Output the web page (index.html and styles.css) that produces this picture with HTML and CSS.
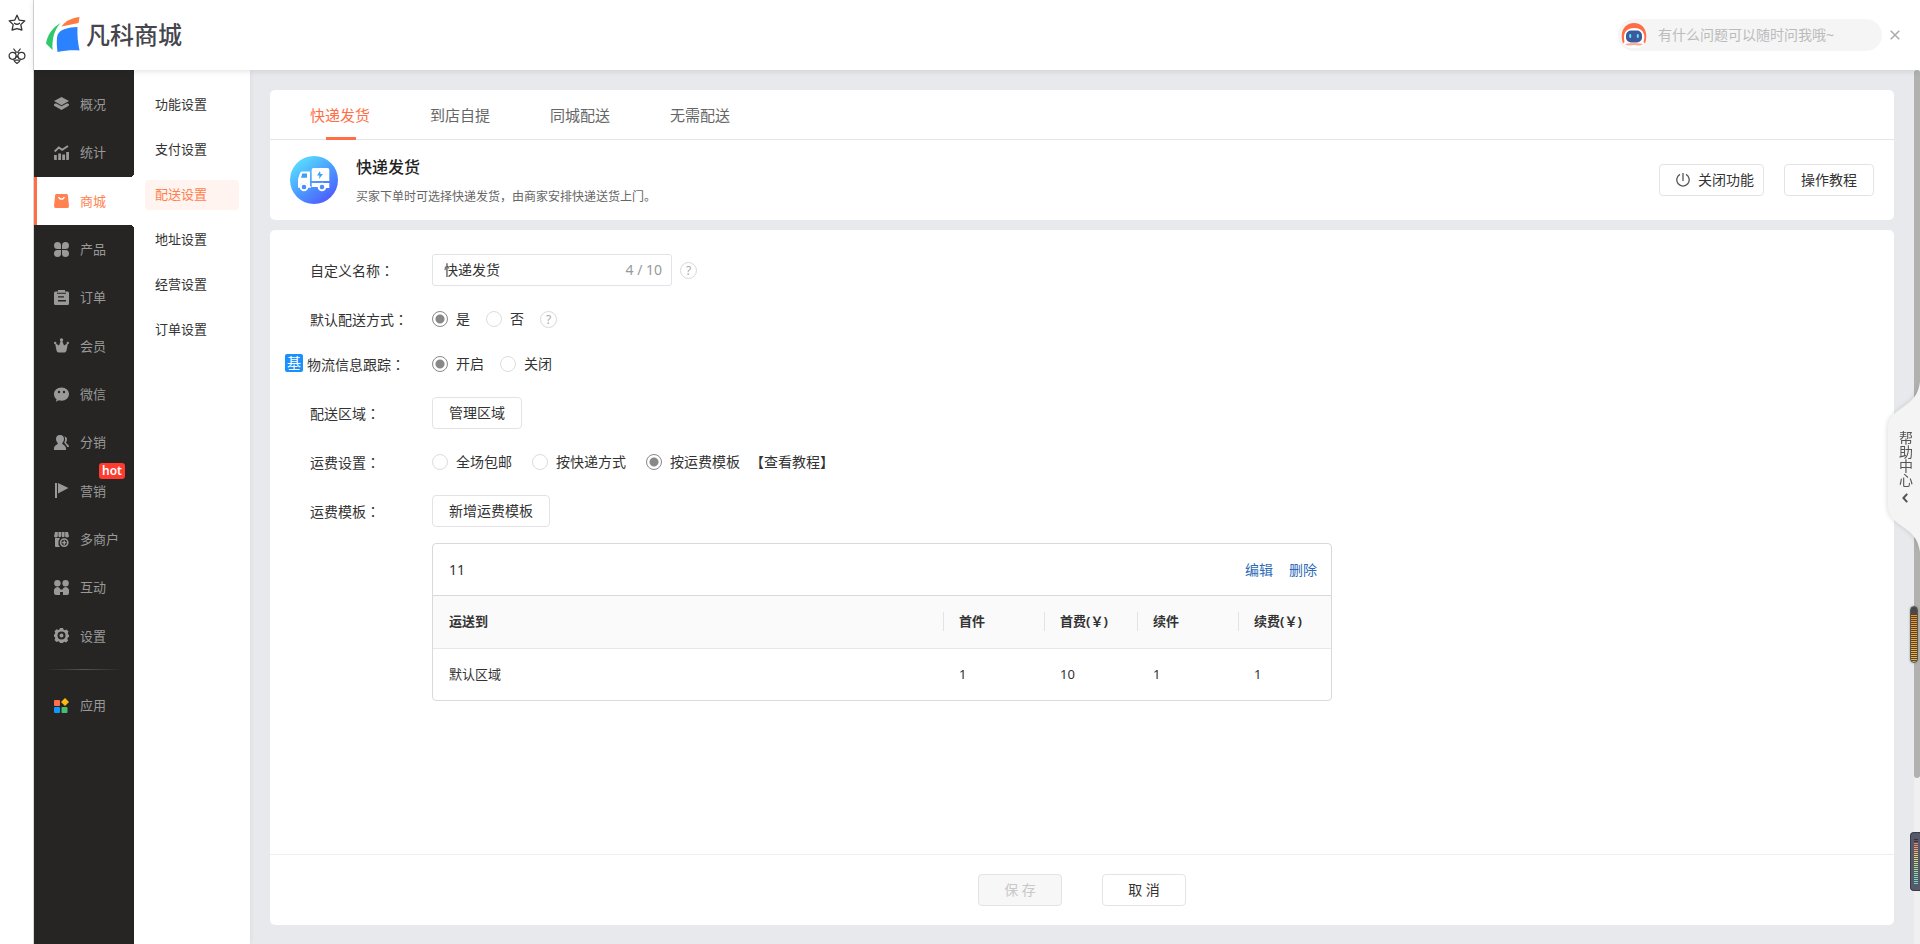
FILE: index.html
```html
<!DOCTYPE html>
<html lang="zh-CN">
<head>
<meta charset="utf-8">
<title>凡科商城 - 配送设置</title>
<link rel="stylesheet" href="styles.css">
</head>
<body>
<aside class="strip">
  <svg class="strip-icon" viewBox="0 0 18 18" fill="none" stroke="#333" stroke-width="1.3" stroke-linejoin="round" stroke-linecap="round"><path d="M9 1.2l2.3 5 5.5.6-4 3.8 1.1 5.4-4.9-1.3L4.100 16l1.100-5.400-4-3.800 5.500-.6z"/><path d="M6.500 9.200q2.500 2.200 5 0"/></svg>
  <svg class="strip-icon" viewBox="0 0 18 18" fill="none" stroke="#333" stroke-width="1.200" stroke-linecap="round"><circle cx="4.600" cy="8.800" r="3.500"/><circle cx="13.400" cy="8.800" r="3.500"/><path d="M7.200 6.200Q9 3.400 10.800 6.200M7.200 11.200L9 9l1.800 2.200M5.800 2L7.400 4.200M12.200 2L10.600 4.200M5.600 12.300C6 14 7.500 15.400 9 16.400c1.500-1 3-2.400 3.400-4.100M7.400 13.200h3.200"/></svg>
</aside>
<div class="app">
  <header class="header">
    <a class="logo" href="#">
      <svg class="logo-mark" viewBox="0 0 34 36"><path d="M14.500 6C6 11 1.500 18 0 26.500l6.500 6.500C6 22 8 13 14.500 6z" fill="#2fc96b"/><path d="M33.500 0C25 1 19 4.500 15.500 9.500L32.500 6z" fill="#ff7a40"/><path d="M31.500 10C22 10.500 14 12 11.500 18c-1 4-1 10 0 17 7-1.500 15-2 22-1.500-1.500-7-2.500-15-2-23.500z" fill="#2b82ff"/></svg>
      <span>凡科商城</span>
    </a>
    <div class="chat">
      <div class="chat-box">
        <svg class="robot" viewBox="0 0 26 26"><circle cx="13" cy="14" r="13" fill="#fff"/><path d="M2 21.500C-2 11 3 1 13 1s15 10 11 20.500l-1.500-1.500c3-9-2-14-9.500-14S1.500 11 3.500 20z" fill="#ff6f47"/><rect x="5" y="8.500" width="16" height="12" rx="5" fill="#3c5a9b"/><rect x="8.200" y="12" width="2" height="4" rx="1" fill="#5be5f5"/><rect x="15.800" y="12" width="2" height="4" rx="1" fill="#5be5f5"/><path d="M4 22q9-2 18 0-2 2-4 1.500-5-.8-10 0Q6 24 4 22z" fill="#ffa890"/></svg>
        <input class="chat-input" type="text" aria-label="咨询问题" placeholder="有什么问题可以随时问我哦~">
      </div>
      <button class="close" aria-label="关闭"><svg viewBox="0 0 10 10" stroke="#aaa" stroke-width="1.500"><path d="M.7.7l8.600 8.600M9.300.7L.7 9.300"/></svg></button>
    </div>
  </header>
  <div class="body">
    <nav class="side">
      <div class="side-list">
        <a class="side-item" href="#"><svg viewBox="0 0 15 15"><path d="M7.500 0L15 4 7.500 8.300 0 4zM0 7.200l1.800-.9 5.700 3 5.700-3 1.800.9c.2 1.300-.5 1.800-1 2.100L7.500 13 1 9.300C.2 8.800-.2 8.300 0 7.200z"/></svg>概况</a>
        <a class="side-item" href="#"><svg viewBox="0 0 15 15"><path d="M0 10h2.800v5H1q-1 0-1-1zM4.200 8.500H7V15H4.200zM8.200 9.500H11V15H8.200zM12.200 7H15v7q0 1-1 1h-1.800z"/><path d="M.6 6.500l4.200-4 3.400 2.400L14 1" fill="none" stroke="currentColor" stroke-width="2"/></svg>统计</a>
        <a class="side-item active" href="#"><svg viewBox="0 0 15 15"><path fill-rule="evenodd" d="M2.500 1h10q1.200 0 1.400 1.200L15 13q0 2-1.500 2h-12Q0 15 0 13L1.100 2.200Q1.300 1 2.500 1zM4 4.200c1 3.400 6 3.400 7 0l-1.300-.4c-.8 2-3.600 2-4.400 0z"/></svg>商城</a>
        <a class="side-item" href="#"><svg viewBox="0 0 15 15"><path d="M3.500 0Q7 0 7 3.500V7H3.500Q0 7 0 3.500T3.500 0zM11.500 0Q15 0 15 3.500T11.500 7H8V3.500Q8 0 11.500 0zM3.500 8H7v3.500Q7 15 3.500 15T0 11.500 3.500 8zM8 8h3.500Q15 8 15 11.500T11.500 15 8 11.500z"/></svg>产品</a>
        <a class="side-item" href="#"><svg viewBox="0 0 15 15"><path fill-rule="evenodd" d="M4 0h7v1.500h2.500Q15 1.500 15 3v10.500q0 1.500-1.500 1.500h-12Q0 15 0 13.500V3q0-1.500 1.500-1.500H4zM3 2.800v1h9v-1zm1 3.400v1.400h6V6.200zM4 10v1.400h8V10z"/></svg>订单</a>
        <a class="side-item" href="#"><svg viewBox="0 0 15 15"><circle cx="7.500" cy="1.900" r="1.700"/><circle cx="1.200" cy="4.900" r="1.200"/><circle cx="13.800" cy="4.900" r="1.200"/><path d="M1 5l4 2.500L6.800 3h1.400L10 7.500 14 5l-1.500 7.500Q12 14.500 10.500 14.500h-6Q3 14.500 2.500 12.500z"/></svg>会员</a>
        <a class="side-item" href="#"><svg viewBox="0 0 15 15"><path fill-rule="evenodd" d="M7.500.5C12 .5 15 3.500 15 7s-3 6.700-7.500 6.700c-1 0-1.800-.1-2.700-.4L2 14.800l.5-2.600C.8 11 0 9 0 7 0 3.500 3 .5 7.500.5zM5 3.800a1.200 1.200 0 100 2.400 1.200 1.200 0 000-2.400zm5 0a1.200 1.200 0 100 2.400 1.200 1.200 0 000-2.400z"/></svg>微信</a>
        <a class="side-item" href="#"><svg viewBox="0 0 15 15"><path d="M6 0c3 0 4 2 4 4 0 1.800-1 3.200-1.800 4.200 0 1.500 3.800 2 3.800 5.300V15H0v-1.500c0-3.300 3.800-3.800 3.800-5.300C3 7.200 2 5.800 2 4c0-2 1-4 4-4zM10.300 1.500c3 .3 3.400 3.300 1.700 6 0 1.200 3 1.800 3 4.500h-1.800c-.5-2-2-2.800-3-4.500C11.500 5.500 11.400 3 10.300 1.500z"/></svg>分销</a>
        <a class="side-item" href="#"><svg viewBox="0 0 15 15"><path d="M1 0h2v15H1zM4 0l10.500 5L4 10.500z"/></svg>营销<span class="hot">hot</span></a>
        <a class="side-item" href="#"><svg viewBox="0 0 15 15"><path d="M1 0h2.800v4.600q-1.800 1.800-3.800 0zM4.400 0h2.800v4.600q-1.300 1.500-2.800 0zM7.800 0h2.800v4.600q-1.300 1.500-2.800 0zM11.200 0H14l1 4.600q-2 1.800-3.800 0zM1 6h5L4.500 9v4l1.500 2H2q-1 0-1-1z"/><circle cx="10.200" cy="10.600" r="3.600" fill="none" stroke="currentColor" stroke-width="1.600"/><path d="M9.500 8.500H11v4.200H9.500zM8.100 9.900h4.200v1.400H8.100z"/></svg>多商户</a>
        <a class="side-item" href="#"><svg viewBox="0 0 15 15"><circle cx="3.400" cy="3.200" r="3.200"/><circle cx="11.600" cy="3.200" r="3.200"/><path d="M0 9.500Q1 7 3.400 7T6.500 9.500h2Q9.200 7 11.600 7T15 9.500V13q0 2-2 2H9v-3H6v3H2q-2 0-2-2z"/></svg>互动</a>
        <a class="side-item" href="#"><svg viewBox="0 0 15 15"><path fill-rule="evenodd" d="M6 0h3l.6 1.800 1.200.5 1.700-.8 2 2-.8 1.800.5 1.100L15 7v2l-1.200.6-.5 1.200.8 1.700-2 2-1.700-.8-1 .5L9 15H6l-.6-1.300-1.200-.5-1.700.8-2-2 .8-1.700-.5-1.200L0 8.500V6.500L.8 6l.5-1-.8-1.700 2-2 1.700.8 1.200-.5zm1.500 3.500a4 4 0 100 8 4 4 0 000-8zm0 2a2 2 0 110 4 2 2 0 010-4z"/></svg>设置</a>
      </div>
      <hr class="side-line">
      <a class="side-item apps" href="#"><svg viewBox="0 0 15 15"><rect y="2" width="6" height="6" rx="1" fill="#ff6f47"/><rect y="9" width="6" height="6" rx="1" fill="#0d99ff"/><rect x="7.500" y="9" width="6" height="6" rx="1" fill="#49bf6b"/><path d="M11 0l4 4-4 4-4-4z" fill="#ffb910"/></svg>应用</a>
    </nav>
    <nav class="sub">
      <a class="sub-item" href="#">功能设置</a>
      <a class="sub-item" href="#">支付设置</a>
      <a class="sub-item current" href="#">配送设置</a>
      <a class="sub-item" href="#">地址设置</a>
      <a class="sub-item" href="#">经营设置</a>
      <a class="sub-item" href="#">订单设置</a>
    </nav>
    <main class="main">
      <section class="card">
        <nav class="tabs">
          <a class="tab selected" href="#">快递发货</a>
          <a class="tab" href="#">到店自提</a>
          <a class="tab" href="#">同城配送</a>
          <a class="tab" href="#">无需配送</a>
        </nav>
        <div class="intro">
          <svg class="truck" viewBox="0 0 48 48"><defs><linearGradient id="g" x1="0.100" y1="0.100" x2="0.800" y2="1"><stop offset="0" stop-color="#5ae0ff"/><stop offset=".5" stop-color="#4a9dff"/><stop offset="1" stop-color="#4f55ff"/></linearGradient></defs><circle cx="24" cy="24" r="24" fill="url(#g)"/><path d="M23.500 12h14q1.800 0 1.800 1.800V25H21.700V13.800q0-1.800 1.800-1.800zM12 15.500h8V31h-2a4 4 0 00-8 0H8v-8l2-6q.5-1.500 2-1.500zM21.700 27h17.600v5H36a4 4 0 00-8-1h-6.300z" fill="#fff"/><path d="M12.300 17.500H17v4.300h-6zM30 15l-3 4.500h2.500l-.5 3.500 4-5h-2.500z" fill="#3c9ffa"/><path d="M8 31h4M18 31h3" stroke="#fff" stroke-width="1.500"/><g fill="#4b8dff" stroke="#fff" stroke-width="2"><circle cx="14" cy="31" r="3.300"/><circle cx="32" cy="31" r="3.300"/></g></svg>
          <div class="intro-text">
            <h1>快递发货</h1>
            <p>买家下单时可选择快递发货，由商家安排快递送货上门。</p>
          </div>
          <div class="intro-actions">
            <button class="btn power"><svg viewBox="0 0 14 14" fill="none" stroke="#555" stroke-width="1.300"><path d="M4 1.400a6.200 6.200 0 106 0M7 0v8"/></svg>关闭功能</button>
            <button class="btn">操作教程</button>
          </div>
        </div>
      </section>
      <section class="card settings">
        <div class="form">
          <div class="row">
            <label class="name" for="title">自定义名称<i lang="zh-TW">：</i></label>
            <span class="text-box"><input id="title" type="text" value="快递发货"><span class="count">4 / 10</span></span>
            <button class="help spaced">?</button>
          </div>
          <div class="row">
            <span class="name">默认配送方式<i lang="zh-TW">：</i></span>
            <label class="radio"><input type="radio" name="def" checked>是</label>
            <label class="radio"><input type="radio" name="def">否</label>
            <button class="help">?</button>
          </div>
          <div class="row">
            <span class="name tagged"><b class="tag">基</b><span>物流信息跟踪<i lang="zh-TW">：</i></span></span>
            <label class="radio"><input type="radio" name="track" checked>开启</label>
            <label class="radio"><input type="radio" name="track">关闭</label>
          </div>
          <div class="row">
            <span class="name">配送区域<i lang="zh-TW">：</i></span>
            <button class="btn">管理区域</button>
          </div>
          <div class="row fees">
            <span class="name">运费设置<i lang="zh-TW">：</i></span>
            <label class="radio"><input type="radio" name="fee">全场包邮</label>
            <label class="radio"><input type="radio" name="fee">按快递方式</label>
            <label class="radio"><input type="radio" name="fee" checked>按运费模板</label>
            <a class="guide" href="#">【查看教程】</a>
          </div>
          <div class="row">
            <span class="name">运费模板<i lang="zh-TW">：</i></span>
            <button class="btn">新增运费模板</button>
          </div>
          <div class="template">
            <div class="template-head"><span>11</span><span class="links"><a href="#">编辑</a><a href="#">删除</a></span></div>
            <table>
              <colgroup><col><col class="wide"><col class="mid"><col class="wide"><col class="mid"></colgroup>
              <thead><tr><th>运送到</th><th>首件</th><th>首费(￥)</th><th>续件</th><th>续费(￥)</th></tr></thead>
              <tbody><tr><td>默认区域</td><td>1</td><td>10</td><td>1</td><td>1</td></tr></tbody>
            </table>
          </div>
        </div>
        <footer class="actions">
          <button class="btn" disabled>保 存</button>
          <button class="btn">取 消</button>
        </footer>
      </section>
    </main>
    <div class="track"><div class="thumb"></div></div>
  </div>
</div>
<a class="help-tab" href="#">
  <svg class="help-shape" viewBox="0 0 32 170" preserveAspectRatio="none"><path d="M32 0C30 14 24 19 11 28 3 34 0 38 0 48v74c0 10 3 14 11 20 13 9 19 14 21 28z" fill="#f4f4f4"/></svg>
  <span>帮助中心</span>
  <svg class="help-arrow" viewBox="0 0 6 10" fill="none" stroke="#555" stroke-width="2"><path d="M5.200.8L1.400 5l3.800 4.200"/></svg>
</a>
<div class="meter amber"></div>
<div class="meter rainbow"></div>
</body>
</html>
```
FILE: styles.css
```css
* { box-sizing: border-box; }
html, body { height: 100%; }
body {
  margin: 0;
  display: flex;
  overflow: hidden;
  background: #fff;
  color: #333;
  font: 14px/20px "Noto Sans", "Noto Sans CJK SC", sans-serif;
}
a { color: inherit; text-decoration: none; }
button, input { font: inherit; color: inherit; margin: 0; }
button { cursor: pointer; }

.strip {
  flex: 0 0 34px;
  display: flex;
  flex-direction: column;
  align-items: center;
  gap: 15px;
  padding-top: 14px;
  border-right: 1px solid #d8d8da;
}
.strip-icon { width: 18px; height: 18px; }

.app { flex: 1; min-width: 0; display: flex; flex-direction: column; }
.header {
  flex: 0 0 70px;
  position: relative;
  z-index: 1;
  display: flex;
  align-items: center;
  justify-content: space-between;
  padding: 0 20px 0 12px;
  background: #fff;
  box-shadow: 0 1px 6px rgba(0, 0, 0, .12);
}
.logo { display: flex; align-items: center; gap: 6px; font-size: 24px; line-height: 36px; font-weight: 500; color: #45454d; }
.logo-mark { width: 34px; height: 36px; }
.chat { display: flex; align-items: center; gap: 8px; }
.chat-box {
  display: flex;
  align-items: center;
  gap: 11px;
  width: 264px;
  height: 32px;
  padding-left: 3px;
  border-radius: 16px;
  background: #f5f5f5;
}
.robot { width: 26px; height: 26px; flex: none; }
.chat-input { flex: 1; min-width: 0; padding: 0; border: 0; outline: 0; background: none; }
.chat-input::placeholder { color: #bbb; opacity: 1; }
.close { display: flex; padding: 0; border: 0; background: none; }
.close svg { width: 10px; height: 10px; }

.body { flex: 1; min-height: 0; display: flex; background: #e8e9ed; }
.side {
  flex: 0 0 100px;
  padding-top: 10px;
  background: #262523;
  color: #999;
  font-size: 13px;
}
.side-list { display: grid; grid-auto-rows: 1fr; height: 580px; }
.side-item { position: relative; display: flex; align-items: center; gap: 11px; padding-left: 20px; }
.side-item svg { width: 15px; height: 15px; fill: currentColor; }
.side-item.active { background: #fff; color: #ff8250; border-left: 3px solid #ff6f47; padding-left: 17px; }
.side-item.active::before, .side-item.active::after {
  content: "";
  position: absolute;
  right: 0;
  width: 4px;
  height: 4px;
}
.side-item.active::before { top: -4px; background: radial-gradient(circle at 0 0, #262523 4px, #fff 4px); }
.side-item.active::after { bottom: -4px; background: radial-gradient(circle at 0 100%, #262523 4px, #fff 4px); }
.hot {
  position: absolute;
  top: -4px;
  right: 9px;
  padding: 0 3px;
  border-radius: 3px;
  background: #ff3b30;
  color: #fff;
  font-size: 12px;
  line-height: 16px;
  font-weight: 600;
}
.side-line { width: 76px; height: 1px; margin: 9px 12px 11px; border: 0; background: linear-gradient(90deg, transparent, #555, transparent); }
.apps { height: 48px; }

.sub {
  flex: 0 0 116px;
  display: flex;
  flex-direction: column;
  gap: 15px;
  padding: 20px 11px;
  background: #fff;
  font-size: 13px;
  box-shadow: 1px 0 4px rgba(0, 0, 0, .05);
}
.sub-item { padding: 4px 10px 6px; border-radius: 4px; }
.sub-item.current { background: #fff4ef; color: #ff7f4d; }

.main { flex: 1; min-width: 0; display: flex; flex-direction: column; gap: 10px; padding: 20px 20px 19px; }
.card { border-radius: 5px; background: #fff; }
.tabs { display: flex; gap: 60px; padding: 0 40px; border-bottom: 1px solid #e5e5e5; font-size: 15px; color: #666; }
.tab { position: relative; padding-top: 1px; line-height: 48px; }
.tab.selected { color: #ff6f47; }
.tab.selected::after { content: ""; position: absolute; left: 16px; bottom: -1px; width: 30px; height: 3px; background: #ff6f47; }
.intro { display: flex; align-items: center; padding: 11px 20px; }
.truck { width: 48px; height: 48px; }
.intro-text { flex: 1; padding: 4px 0 0 18px; color: #666; font-size: 12px; }
h1 { margin: 0 0 6px; font-size: 16px; line-height: 24px; font-weight: 500; color: #222; }
.intro-text p { margin: 0; line-height: 24px; }
.intro-actions { display: flex; gap: 20px; }
.btn {
  height: 32px;
  padding: 0 16px;
  border: 1px solid #e3e3e5;
  border-radius: 4px;
  background: #fff;
}
.power { display: flex; align-items: center; gap: 8px; padding-right: 9px; }
.power svg { width: 14px; height: 14px; }

.settings { flex: 1; display: flex; flex-direction: column; }
.form { flex: 1; padding: 24px 15px; }
.row { display: flex; align-items: center; min-height: 24px; margin-bottom: 21px; }
.name { width: 147px; padding-left: 25px; white-space: nowrap; }
.name i { font-style: normal; font-family: "Noto Sans CJK TC", sans-serif; text-spacing-trim: space-all; }
.tagged { display: flex; gap: 4px; padding-left: 0; }
.tag { width: 18px; height: 18px; line-height: 18px; text-align: center; border-radius: 2px; background: #1890ff; color: #fff; font-weight: 400; }
.text-box { display: flex; align-items: center; width: 240px; height: 32px; padding: 0 9px 0 11px; border: 1px solid #e3e3e5; border-radius: 3px; }
.text-box input { flex: 1; min-width: 0; padding: 0; border: 0; outline: 0; background: none; }
.count { color: #999; }
.help { width: 17px; height: 17px; padding: 0; border: 1px solid #d8d8de; border-radius: 50%; background: none; color: #aaa; font-size: 12px; line-height: 15px; }
.help.spaced { margin-left: 8px; }
.radio { display: flex; align-items: center; gap: 8px; margin-right: 16px; }
.fees .radio { margin-right: 20px; }
.radio input { appearance: none; width: 16px; height: 16px; border: 1px solid #ddd; border-radius: 50%; background: #fff; }
.radio input:checked { border-color: #888; background: radial-gradient(circle, #888 4px, transparent 5px); }
.guide { margin-left: -10px; }
.template { max-width: 900px; margin: -5px 0 0 147px; border: 1px solid #d9d9db; border-radius: 4px; }
.template-head { display: flex; justify-content: space-between; padding: 16px 14px 15px 16px; border-bottom: 1px solid #d9d9db; }
.links { display: flex; gap: 16px; color: #2d6bb8; }
table { width: 100%; table-layout: fixed; border-collapse: collapse; font-size: 13px; }
.wide { width: 101px; }
.mid { width: 93px; }
th, td { padding: 16px; height: 52px; text-align: left; line-height: 19px; }
th { position: relative; background: #fafafa; border-bottom: 1px solid #e8e8e8; font-weight: 700; white-space: nowrap; }
th + th::before { content: ""; position: absolute; left: 0; top: 16px; width: 1px; height: 19px; background: #e3e3e3; }
.actions { display: flex; justify-content: center; gap: 40px; padding: 19px 0; border-top: 1px solid #eee; }
.actions .btn { width: 84px; }
.btn:disabled { background: #f7f7f7; color: #c8c8c8; }

.track { flex: 0 0 6px; background: #f0f0f0; }
.thumb { height: 81%; border-radius: 3px; background: #b1b1af; }
.help-tab {
  position: absolute;
  z-index: 2;
  right: 0;
  top: 382px;
  width: 32px;
  height: 170px;
  padding-top: 49px;
  color: #555;
  filter: drop-shadow(-1px 0 2px rgba(0, 0, 0, .12));
}
.help-shape { position: absolute; inset: 0; width: 100%; height: 100%; }
.help-tab span { position: relative; display: block; width: 20px; margin-left: 7px; writing-mode: vertical-rl; }
.help-arrow { position: relative; display: block; width: 6px; height: 10px; margin: 6px 0 0 14px; }
.meter { position: absolute; z-index: 2; }
.amber {
  right: 2px;
  top: 606px;
  width: 8px;
  height: 57px;
  border-radius: 4px;
  border: 1px solid #555;
  background: repeating-linear-gradient(transparent 0 1px, #444 1px 2px), linear-gradient(#4c4c4c 7px, #ff9010 7px, #ffb82e);
  box-shadow: 0 0 2px #888;
}
.rainbow {
  right: 0;
  top: 832px;
  width: 10px;
  height: 59px;
  padding: 6px 1px 6px 3px;
  border: 1px solid #383c49;
  border-right: 0;
  border-radius: 4px 0 0 4px;
  background: #555968;
}
.rainbow::before {
  content: "";
  display: block;
  width: 4px;
  height: 45px;
  background: repeating-linear-gradient(transparent 0 1px, #555968 1px 2px), linear-gradient(#333 4px, #ff7474 4px, #f2d468 18px, #b4dd85 28px, #63d8d0);
}
```
